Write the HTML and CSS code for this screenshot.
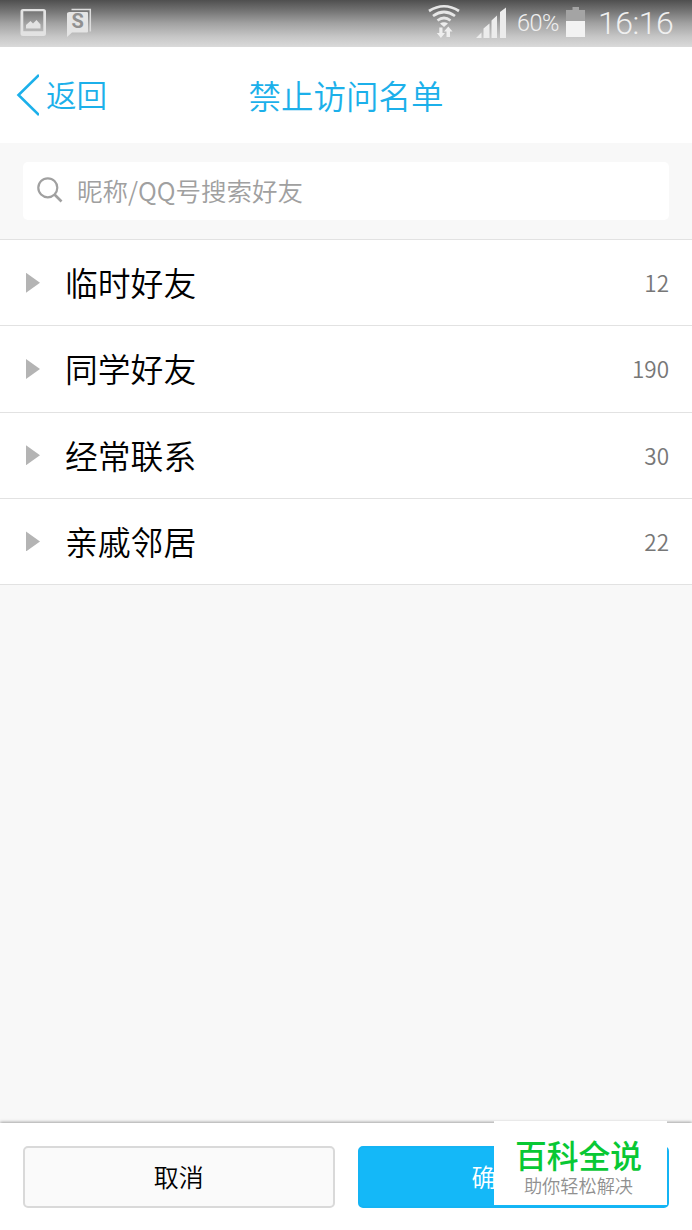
FILE: index.html
```html
<!DOCTYPE html>
<html lang="zh-CN">
<head>
<meta charset="utf-8">
<title>禁止访问名单</title>
<link rel="stylesheet" href="styles.css">
</head>
<body>
<div class="status">
  <svg class="status-left" width="100" height="46" viewBox="0 0 100 46">
    <path fill="#e2e2e2" fill-rule="evenodd" d="M23 9h20.500q2.500 0 2.500 2.500v22q0 2.500-2.500 2.500H23q-2.500 0-2.500-2.500v-22Q20.500 9 23 9zM23.300 11.300v20h20v-20z"/>
    <path fill="#e2e2e2" d="M26 28.500v-3.500l4.500-4 2.500 2.500 3.500-3.500 4 4.500v4z"/>
    <path fill="none" stroke="#dcdcdc" stroke-width="1.500" d="M71.500 9.500h18.800v22"/>
    <path fill="#e4e4e4" d="M69.500 12H87q1 0 1 1v18.500q0 1-1 1H72l-5 4.500V13.500q0-1.500 2.500-1.500z"/>
    <text class="note-letter" x="77.700" y="28.300" text-anchor="middle">S</text>
  </svg>
  <div class="status-right">
    <svg width="80" height="46" viewBox="0 0 80 46">
      <g fill="none" stroke="#e6e6e6" stroke-width="2.700">
        <path d="M1 11Q16 1.500 31 11"/>
        <path d="M5 16Q16 8 27 16"/>
        <path d="M9.500 20.500Q16 15.500 22.500 20.500"/>
      </g>
      <path fill="#eee" d="M12 23.500q4-2.500 8 0L16 27z"/>
      <path fill="#eee" d="M11.300 27.500h3.200v5.500H17l-4.100 5-4.100-5h2.500zM18.500 37v-5.500H16l4.300-5 4.200 5H22V37z"/>
      <path fill="#ececec" d="M48 38l5.500-5.500V38zM55.500 38v-9.500l6-5V38zM63.500 38V20.500l5.500-5V38zM72 38V12l6-4.500V38z"/>
    </svg>
    <span class="percent">60%</span>
    <svg class="battery" width="20" height="46" viewBox="0 0 20 46">
      <path fill="#a4a4a4" d="M6.500 7H13v3h6v12H0V10h6.500z"/>
      <path fill="#f2f2f2" d="M0 21h19v16H0z"/>
    </svg>
    <span class="clock">16:16</span>
  </div>
</div>
<header class="header">
  <div class="back">
    <svg width="24" height="42" viewBox="0 0 24 42"><path d="M24 1L3.500 21 24 41" fill="none" stroke="#1cb0ea" stroke-width="2.600"/></svg>
    <span>返回</span>
  </div>
  <h1 class="title">禁止访问名单</h1>
</header>
<div class="search">
  <div class="search-box">
    <svg width="26" height="26" viewBox="0 0 26 26" fill="none" stroke="#a0a0a0"><circle cx="10.800" cy="10.800" r="9.500" stroke-width="2.200"/><path d="M17.500 17.500l7 7" stroke-width="2.600"/></svg>
    <span>昵称/QQ号搜索好友</span>
  </div>
</div>
<main class="groups">
  <div class="row"><i class="arrow"></i><span class="name">临时好友</span><span class="count">12</span></div>
  <div class="row"><i class="arrow"></i><span class="name">同学好友</span><span class="count">190</span></div>
  <div class="row"><i class="arrow"></i><span class="name">经常联系</span><span class="count">30</span></div>
  <div class="row"><i class="arrow"></i><span class="name">亲戚邻居</span><span class="count">22</span></div>
</main>
<footer class="footer">
  <div class="button cancel">取消</div>
  <div class="button confirm">确</div>
</footer>
<div class="badge">
  <div class="badge-title">百科全说</div>
  <div class="badge-sub">助你轻松解决</div>
</div>
</body>
</html>
```
FILE: styles.css
```css
* { box-sizing: border-box; }
body {
  margin: 0;
  height: 1230px;
  display: flex;
  flex-direction: column;
  position: relative;
  overflow: hidden;
  background: #f8f8f8;
  color: #000;
  font-family: "Noto Sans CJK SC", sans-serif;
  font-weight: 350;
}
.status {
  flex: none;
  height: 47px;
  display: flex;
  justify-content: space-between;
  background: linear-gradient(#4f4f4f, #777 25%, #a2a2a2 50%, #c6c6c6 78%, #dadada);
  color: #f0f0f0;
  font-family: Roboto, sans-serif;
}
.note-letter { font: 700 20px Roboto, sans-serif; fill: #909090; }
.status-right {
  display: flex;
  align-items: center;
  width: 264px;
  height: 46px;
}
.status-right svg { flex: none; }
.percent { width: 58px; padding-left: 9px; font-size: 23.500px; letter-spacing: -0.500px; font-weight: 350; white-space: nowrap; }
.clock { margin-left: 12px; font-size: 32px; font-weight: 350; letter-spacing: -0.500px; }
.header {
  flex: none;
  height: 96px;
  display: grid;
  grid-template-columns: 1fr auto 1fr;
  align-items: center;
  background: #fff;
  color: #1cb0ea;
}
.back { display: flex; align-items: center; padding-left: 15px; font-size: 30.500px; gap: 7px; }
.back span { line-height: 42px; padding-bottom: 2px; }
.title { margin: 0; font-size: 32.500px; line-height: 48px; font-weight: 350; }
.search { flex: none; height: 97px; padding: 19px 23px 19px; border-bottom: 1px solid #e2e2e2; }
.search-box {
  height: 58px;
  display: flex;
  align-items: center;
  gap: 14px;
  padding: 0 0 2px 14px;
  border-radius: 5px;
  background: #fff;
  color: #a0a0a0;
  font-size: 25.500px;
}
.search-box span { padding-bottom: 1px; }
.groups { flex: none; height: 345px; display: grid; grid-template-rows: repeat(4, 1fr); }
.row {
  display: flex;
  align-items: center;
  padding: 0 23px 0 26px;
  background: #fff;
  border-bottom: 1px solid #e2e2e2;
}
.arrow { width: 14px; height: 20px; background: #b4b4b4; clip-path: polygon(0 0, 100% 50%, 0 100%); }
.name { margin-left: 25px; padding-bottom: 1px; font-size: 32.800px; line-height: 48px; }
.count { margin-left: auto; padding-bottom: 1px; color: #777; font-size: 22.500px; }
.footer {
  flex: none;
  height: 107px;
  margin-top: auto;
  padding: 23px 23px 22px;
  display: grid;
  grid-template-columns: 1fr 1fr;
  gap: 23px;
  background: #fff;
  box-shadow: 0 -1px 3px rgba(0, 0, 0, 0.35);
}
.button { height: 62px; border-radius: 5px; font-size: 25px; line-height: 56px; text-align: center; }
.cancel { border: 2px solid #d9d9d9; background: #fafafa; }
.confirm { background: #14b8f8; border: 2px solid #14b4f4; color: #fff; text-align: left; padding-left: 112px; }
.badge {
  position: absolute;
  left: 494px;
  top: 1121px;
  width: 173px;
  height: 84px;
  padding-top: 14px;
  background: #fff;
  text-align: center;
}
.badge-title { padding-right: 4px; color: #08c834; font-size: 31.800px; line-height: 38px; font-weight: 500; }
.badge-sub { padding: 1px 4px 0 0; color: #909090; font-size: 18.200px; line-height: 22px; }
```
